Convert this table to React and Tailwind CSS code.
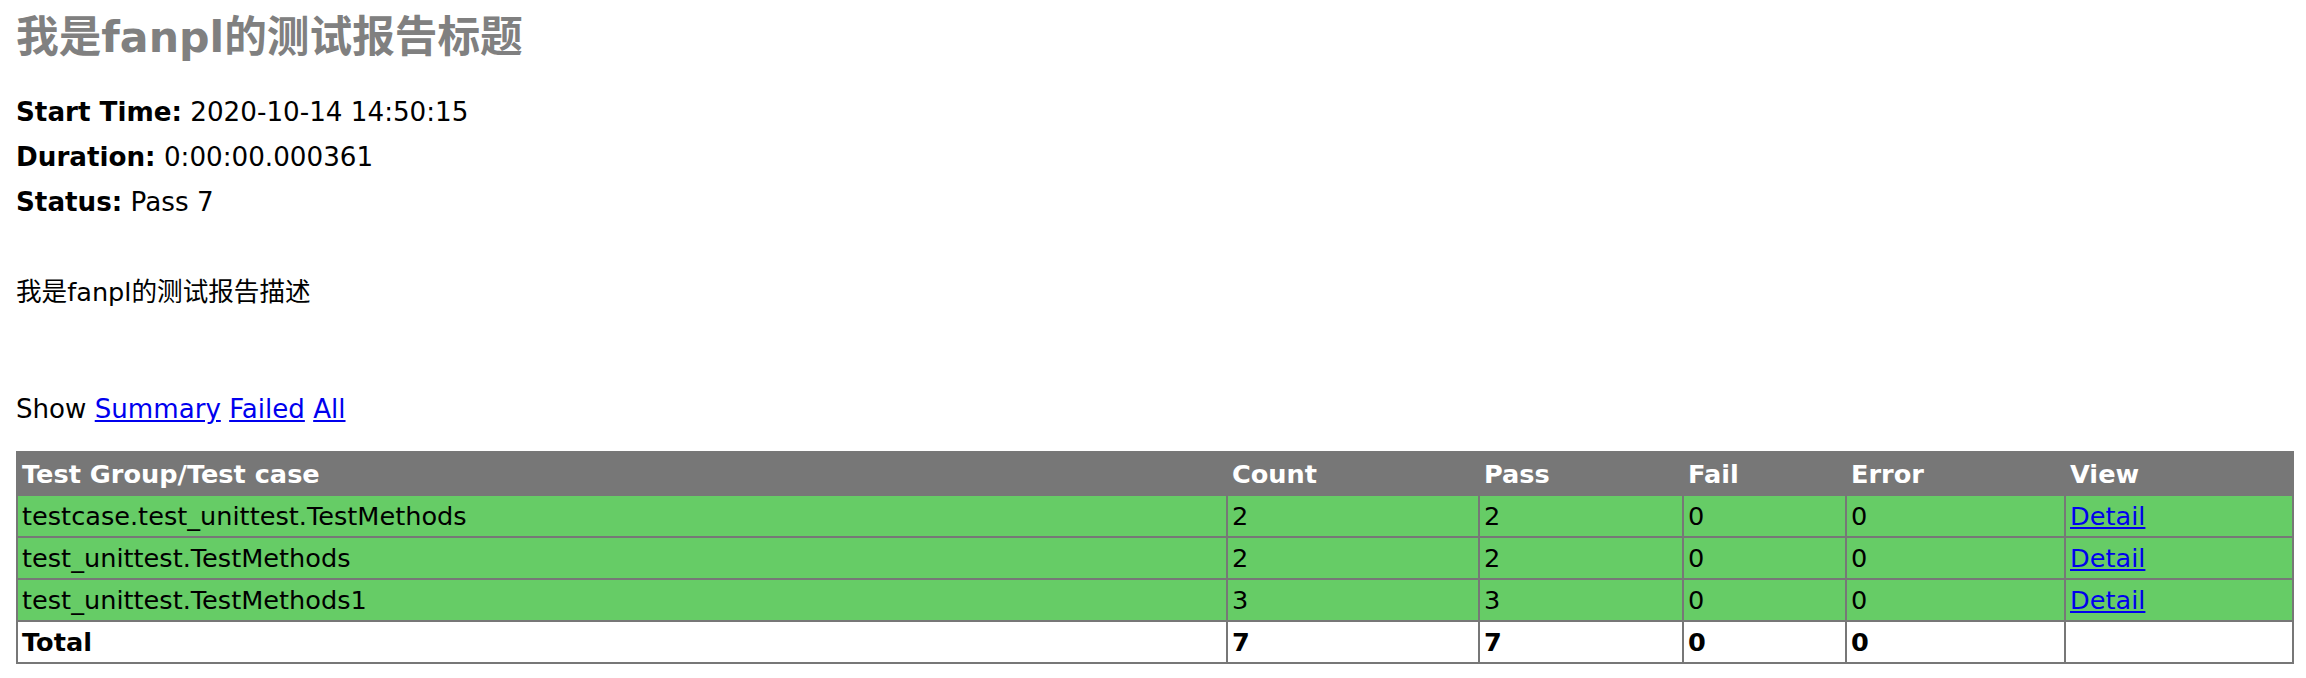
import React from "react";

const rows = [
  { name: "testcase.test_unittest.TestMethods", count: 2, pass: 2, fail: 0, error: 0 },
  { name: "test_unittest.TestMethods", count: 2, pass: 2, fail: 0, error: 0 },
  { name: "test_unittest.TestMethods1", count: 3, pass: 3, fail: 0, error: 0 },
];

export default function App() {
  return (
    <div className="bg-white text-black pt-[12px] pl-[16px] pr-[12px] pb-[14px] font-['DejaVu_Sans','Noto_Sans_CJK_SC',sans-serif] text-[25.6px]">
      <h1 className="text-[42.67px] leading-[50px] font-bold text-[#808080]">
        我是fanpl的测试报告标题
      </h1>
      <div className="mt-[35px] leading-[31px]">
        <p className="text-[26.2px]">
          <strong className="font-bold">Start Time:</strong> 2020-10-14 14:50:15
        </p>
        <p className="mt-[14px] text-[26.2px]">
          <strong className="font-bold">Duration:</strong> 0:00:00.000361
        </p>
        <p className="mt-[14px] text-[26.2px]">
          <strong className="font-bold">Status:</strong> Pass 7
        </p>
        <p className="mt-[59px]">我是fanpl的测试报告描述</p>
        <p className="mt-[86px] text-[26.1px]">
          Show{" "}
          <a href="#" className="text-[#0000ee] underline">
            Summary
          </a>{" "}
          <a href="#" className="text-[#0000ee] underline">
            Failed
          </a>{" "}
          <a href="#" className="text-[#0000ee] underline">
            All
          </a>
        </p>
      </div>
      <table className="mt-[26px] w-[2278px] table-fixed border-collapse border-2 border-[#777] leading-[30px]">
        <colgroup>
          <col className="w-[1210px]" />
          <col className="w-[252px]" />
          <col className="w-[204px]" />
          <col className="w-[163px]" />
          <col className="w-[219px]" />
          <col />
        </colgroup>
        <tbody>
          <tr className="h-[43px] bg-[#777] text-white font-bold">
            <td className="border-2 border-[#777] px-[4px] text-left">Test Group/Test case</td>
            <td className="border-2 border-[#777] px-[4px] text-left">Count</td>
            <td className="border-2 border-[#777] px-[4px] text-left">Pass</td>
            <td className="border-2 border-[#777] px-[4px] text-left">Fail</td>
            <td className="border-2 border-[#777] px-[4px] text-left">Error</td>
            <td className="border-2 border-[#777] px-[4px] text-left">View</td>
          </tr>
          {rows.map((r) => (
            <tr key={r.name} className="h-[42px] bg-[#66cc66]">
              <td className="border-2 border-[#777] px-[4px]">{r.name}</td>
              <td className="border-2 border-[#777] px-[4px]">{r.count}</td>
              <td className="border-2 border-[#777] px-[4px]">{r.pass}</td>
              <td className="border-2 border-[#777] px-[4px]">{r.fail}</td>
              <td className="border-2 border-[#777] px-[4px]">{r.error}</td>
              <td className="border-2 border-[#777] px-[4px]">
                <a href="#" className="text-[#0000ee] underline">
                  Detail
                </a>
              </td>
            </tr>
          ))}
          <tr className="h-[42px] bg-white font-bold">
            <td className="border-2 border-[#777] px-[4px]">Total</td>
            <td className="border-2 border-[#777] px-[4px]">7</td>
            <td className="border-2 border-[#777] px-[4px]">7</td>
            <td className="border-2 border-[#777] px-[4px]">0</td>
            <td className="border-2 border-[#777] px-[4px]">0</td>
            <td className="border-2 border-[#777] px-[4px]">&nbsp;</td>
          </tr>
        </tbody>
      </table>
    </div>
  );
}
